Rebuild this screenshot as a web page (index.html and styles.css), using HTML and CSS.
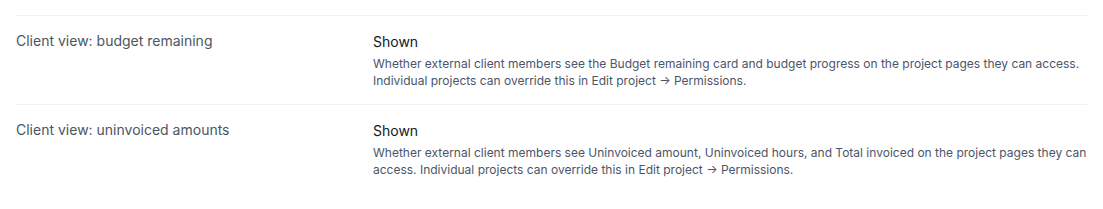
FILE: index.html
```html
<!DOCTYPE html>
<html lang="en">
<head>
    <meta charset="UTF-8">
    <meta name="viewport" content="width=device-width, initial-scale=1.0">
    <title>Client settings</title>
    <link rel="stylesheet" href="styles.css">
</head>
<body>
    <div class="settings">
        <div class="setting-row">
            <div class="setting-label">Client view: budget remaining</div>
            <div class="setting-value">
                <div class="value-text">Shown</div>
                <p class="value-help">Whether external client members see the Budget remaining card and budget progress on the project pages they can access. Individual projects can override this in Edit project → Permissions.</p>
            </div>
        </div>
        <div class="setting-row">
            <div class="setting-label">Client view: uninvoiced amounts</div>
            <div class="setting-value">
                <div class="value-text">Shown</div>
                <p class="value-help">Whether external client members see Uninvoiced amount, Uninvoiced hours, and Total invoiced on the project pages they can access. Individual projects can override this in Edit project → Permissions.</p>
            </div>
        </div>
    </div>
</body>
</html>
```

FILE: styles.css
```css
body {
    margin: 0;
    font-family: Inter, "Noto Sans", sans-serif;
    background-color: #ffffff;
}

.settings {
    padding: 15px 16px 0 16px;
}

.setting-row {
    display: grid;
    grid-template-columns: 1fr 2fr;
    border-top: 1px solid #f0f1f4;
    padding: 15px 0 15px 0;
}

.setting-label {
    font-size: 14px;
    line-height: 20px;
    color: #4b5563;
}

.setting-value {
    padding-top: 1px;
}

.value-text {
    font-size: 14px;
    line-height: 20px;
    color: #111827;
}

.value-help {
    margin: 3px 0 0 0;
    font-size: 12px;
    line-height: 17px;
    color: #4b5569;
}
```
